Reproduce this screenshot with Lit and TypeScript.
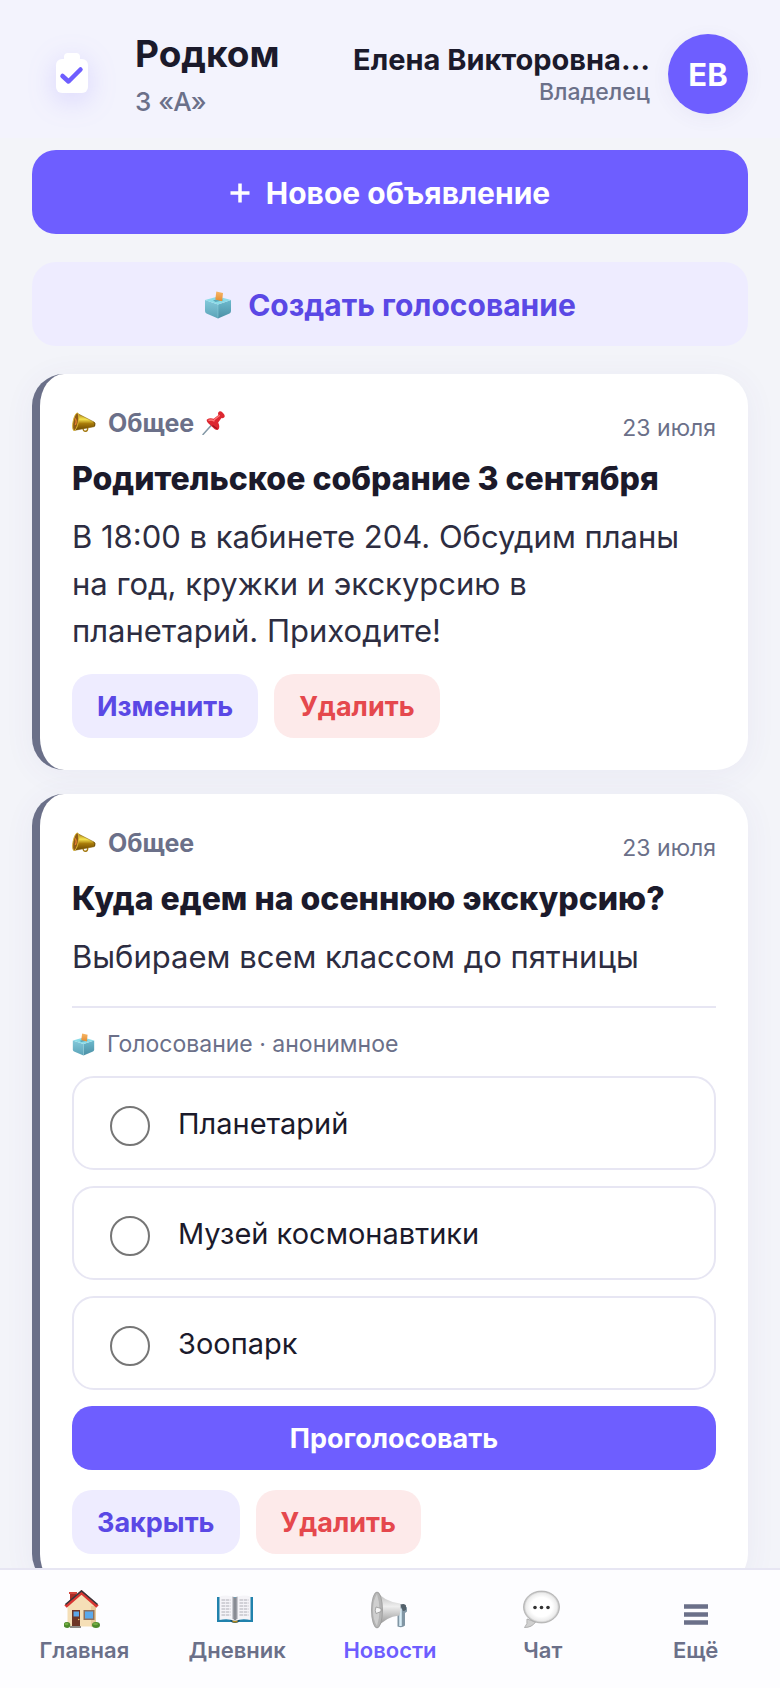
import { css, html, LitElement, nothing } from "lit";
import { customElement, property, state } from "lit/decorators.js";
import { classMap } from "lit/directives/class-map.js";

const icons = {
  logo: html`
    <svg viewBox="0 0 80 80" aria-hidden="true">
      <rect x="32" y="19" width="16" height="14" rx="4" fill="#fff" />
      <rect x="24" y="25" width="32" height="34" rx="6" fill="#fff" />
      <path d="M30.500 42l6 5.500L48.500 35.500" fill="none" stroke="#6e5eff" stroke-width="4.500"
        stroke-linecap="round" stroke-linejoin="round" />
    </svg>`,

  plus: html`
    <svg class="plus" viewBox="0 0 20 20" aria-hidden="true">
      <path d="M10 .500v19M.500 10h19" stroke="#fff" stroke-width="3.500" />
    </svg>`,

  ballot: html`
    <svg viewBox="0 0 28 28" aria-hidden="true">
      <defs>
        <linearGradient id="ballot-l" x1="0" y1="0" x2="0" y2="1">
          <stop offset="0" stop-color="#83c9da" /><stop offset="1" stop-color="#5ba3b8" />
        </linearGradient>
        <linearGradient id="ballot-r" x1="0" y1="0" x2="0" y2="1">
          <stop offset="0" stop-color="#6dbacd" /><stop offset="1" stop-color="#4b8fa5" />
        </linearGradient>
        <linearGradient id="ballot-p" x1="0" y1="0" x2="0" y2="1">
          <stop offset="0" stop-color="#f8b765" /><stop offset="1" stop-color="#e38c34" />
        </linearGradient>
      </defs>
      <path d="M1 9L14 13.500v14L2.500 22.500Q1 21.800 1 20z" fill="url(#ballot-l)" />
      <path d="M27 9L14 13.500v14l11.500-5Q27 21.800 27 20z" fill="url(#ballot-r)" />
      <path d="M1 9L14 5.500 27 9 14 13.500z" fill="#8bdce8" />
      <path d="M9 9.300l8-1.600 2.500 1.500-8 1.800z" fill="#5aa9bb" />
      <path d="M12.300.500l6.700 1.600-.9 8.200-6.800-1.700z" fill="url(#ballot-p)" />
      <path d="M14 13.500v13" fill="none" stroke="#8fd3df" stroke-width=".500" />
    </svg>`,

  horn: html`
    <svg viewBox="0 0 26 24" aria-hidden="true">
      <defs>
        <linearGradient id="horn-g" x1="0" y1="0" x2="0" y2="1">
          <stop offset="0" stop-color="#a47a0c" /><stop offset=".35" stop-color="#f6e34f" />
          <stop offset=".6" stop-color="#a87b0a" /><stop offset="1" stop-color="#6b4700" />
        </linearGradient>
      </defs>
      <path d="M12 17.500q0 3.700 2.800 3.500 2.400-.2 2.200-3.800" fill="none" stroke="#a47a12" stroke-width="1.500" />
      <path d="M5.500 1.500L24 11q1.300 1 .9 3.500l-1 1.500L2.500 20z" fill="url(#horn-g)" stroke="#83600f" stroke-width=".600" />
      <path d="M23.500 10.800q2 1.200.7 5" fill="none" stroke="#6b4d0e" stroke-width="1" />
      <ellipse cx="4" cy="10.700" rx="2.800" ry="9.700" transform="rotate(11 4 10.700)" fill="#8d5b18" stroke="#dcb632" stroke-width="1" />
      <path d="M3.200 7q2.500 3 .3 7" fill="none" stroke="#e9812f" stroke-width="1.400" />
    </svg>`,

  pin: html`
    <svg viewBox="0 0 24 24" aria-hidden="true">
      <path d="M1 23.500L10.500 13" stroke="#8398a6" stroke-width="1.500" stroke-linecap="round" />
      <path d="M16.300 1.500q1.500-2.500 4.500.2 3.300 3 1 5-1.200.8-2.300.3l-3.300 4.500q2.300 5.300-.2 7.300-1.500.6-3.500-.9L6 12Q4 9.500 5 8.500q2.500-2 6.700-.8L16.500 4q-.8-1-.2-2.500z" fill="#dc2730" />
      <path d="M12.500 8.500l4.800-3.700M7 9.300q3-.8 5 .6" fill="none" stroke="#ff7474" stroke-width="1.400" stroke-linecap="round" />
      <path d="M10.500 14.500q2.500 1.800 4.700 3.200" fill="none" stroke="#9e1320" stroke-width="1.200" />
    </svg>`,

  home: html`
    <svg viewBox="2 0 40 40" aria-hidden="true">
      <path d="M8 2h6v12H8z" fill="#a92c27" /><path d="M7 2h8v2H7z" fill="#d3453c" />
      <path d="M5.500 16L19.500 3 34 16v20.500H5.500z" fill="#f5dfb7" />
      <path d="M29 16h5v20.500h-5z" fill="#e8cb9b" />
      <path d="M3.500 16.500L19.500 2.500l16 14" fill="none" stroke="#d93632" stroke-width="3.600" />
      <path d="M3.500 14.500L19.500 1l16 13.500" fill="none" stroke="#35363b" stroke-width="1.600" />
      <path d="M10 20h8v17h-8z" fill="#6d3526" /><path d="M11.500 21.500h5.500v5h-5.500z" fill="#5ba7e8" />
      <circle cx="16.700" cy="29.500" r=".800" fill="#e8be5c" />
      <path d="M21.500 20h11v10h-11z" fill="#8f705c" /><path d="M23 21.500h8v7h-8z" fill="#5ba9ec" />
      <path d="M8 36h11v2H8z" fill="#8d8b87" />
      <ellipse cx="5" cy="35" rx="3.300" ry="2.900" fill="#4d8a2c" /><ellipse cx="34" cy="35" rx="4" ry="2.900" fill="#4d8a2c" />
      <ellipse cx="4.500" cy="34" rx="2" ry="1.300" fill="#75ad43" /><ellipse cx="33.500" cy="34" rx="2.500" ry="1.300" fill="#75ad43" />
    </svg>`,

  book: html`
    <svg viewBox="2 0 40 40" aria-hidden="true">
      <path d="M2 7h36v25H2z" fill="#2182ad" />
      <path d="M15 30h10q-1 3-5 3t-5-3z" fill="#16516e" />
      <path d="M17 30.500h6l-1 2h-4z" fill="#b38b20" />
      <path d="M4.500 6.500Q13 4 20 8v23q-7-3-15.500-1z" fill="#f5f4f8" />
      <path d="M35.500 6.500Q27 4 20 8v23q7-3 15.500-1z" fill="#f5f4f8" />
      <path d="M17.500 6.500q1.500 0 2.500 1.500 1-1.500 2.500-1.500v22.500q-1.500 0-2.500 2-1-2-2.500-2z" fill="#9b9da5" />
      <path d="M20 8v22" stroke="#666a72" stroke-width=".700" />
      <path d="M6.500 10h9M6.500 13h9M6.500 16h9M6.500 19h9M6.500 22h9M6.500 25h9M24.500 10h9M24.500 13h9M24.500 16h9M24.500 19h9M24.500 22h9M24.500 25h9"
        stroke="#a7a6af" stroke-width=".900" stroke-dasharray="3.500 .700" />
    </svg>`,

  news: html`
    <svg viewBox="0 0 40 40" aria-hidden="true">
      <defs>
        <linearGradient id="news-g" x1="0" y1="0" x2="0" y2="1">
          <stop offset="0" stop-color="#b5b5b5" /><stop offset=".4" stop-color="#eee" />
          <stop offset="1" stop-color="#858585" />
        </linearGradient>
      </defs>
      <path d="M27.500 17l6-2.500 3.500 3v4l-2 1.500v12.500q-3 3-7.500 1z" fill="#8196a4" />
      <path d="M30.500 18.500v17.500" stroke="#d8edf7" stroke-width="2.500" />
      <path d="M30 14.500q5-1.500 6 1v4q-1 1.500-3 1.500z" fill="#53616b" />
      <path d="M8 2q5 9 22 11.500 1.500 5-.5 12Q15 27 7 38z" fill="url(#news-g)" />
      <ellipse cx="7" cy="20" rx="5.500" ry="18" fill="#b5b5b5" stroke="#999" stroke-width=".800" />
      <path d="M7 4q5 16 0 32-4-6-4-16T7 4z" fill="#cfcfcf" />
      <path d="M6 17l5 1.500v3L6 23.500q-1.500-3 0-6.500z" fill="#f6f6f6" stroke="#8c8c8c" stroke-width=".700" />
    </svg>`,

  chat: html`
    <svg viewBox="3 0 40 40" aria-hidden="true">
      <defs>
        <radialGradient id="chat-g">
          <stop offset=".6" stop-color="#fff" /><stop offset=".87" stop-color="#ececec" />
          <stop offset="1" stop-color="#b3b3b3" />
        </radialGradient>
      </defs>
      <path d="M7 29q1 5-2.500 8.500Q12 37.500 15.500 32z" fill="#d0d0d0" stroke="#aaa" stroke-width=".900" />
      <ellipse cx="21.500" cy="17" rx="18" ry="16" fill="url(#chat-g)" stroke="#aaa" stroke-width=".700" />
      <circle cx="15" cy="17.500" r="1.800" fill="#333" /><circle cx="21.500" cy="17.500" r="1.800" fill="#333" />
      <circle cx="28" cy="17.500" r="1.800" fill="#333" />
    </svg>`,

  menu: html`
    <svg viewBox="0 0 40 40" aria-hidden="true">
      <path d="M8 16.500h24M8 24.500h24M8 32.500h24" stroke="#6b7089" stroke-width="4.500" />
    </svg>`,
};

interface Post {
  title: string;
  body: string;
  date: string;
  pinned?: boolean;
  options?: string[];
  action: string;
}

const posts: Post[] = [
  {
    title: "Родительское собрание 3 сентября",
    body: "В 18:00 в кабинете 204. Обсудим планы на год, кружки и экскурсию в планетарий. Приходите!",
    date: "23 июля",
    pinned: true,
    action: "Изменить",
  },
  {
    title: "Куда едем на осеннюю экскурсию?",
    body: "Выбираем всем классом до пятницы",
    date: "23 июля",
    options: ["Планетарий", "Музей космонавтики", "Зоопарк"],
    action: "Закрыть",
  },
];

const tabs = [
  { id: "home", label: "Главная" },
  { id: "book", label: "Дневник" },
  { id: "news", label: "Новости" },
  { id: "chat", label: "Чат" },
  { id: "menu", label: "Ещё" },
] as const;

const shared = css`
  * {
    box-sizing: border-box;
  }

  svg {
    display: block;
    flex: none;
  }

  button {
    border: 0;
    font-family: inherit;
    font-weight: 700;
    cursor: pointer;
  }

  .primary {
    background: #6e5eff;
    color: #fff;
  }

  .soft {
    background: #eeecff;
    color: #5a48e5;
  }

  .danger {
    background: #fdeaea;
    color: #e5484d;
  }
`;

@customElement("news-card")
export class NewsCard extends LitElement {
  @property({ attribute: false }) post!: Post;

  static styles = [
    shared,
    css`
      :host {
        display: block;
      }

      .card {
        padding: 32px;
        border-left: 8px solid #6b7089;
        border-radius: 32px;
        background: #fff;
        box-shadow: 0 4px 32px rgba(80, 70, 160, 0.06);
      }

      .head {
        display: flex;
        justify-content: space-between;
        height: 44px;
        margin-bottom: 11px;
        color: #6b7089;
      }

      .category {
        display: flex;
        align-items: center;
        height: 34px;
        font-size: 25px;
        font-weight: 700;
      }

      .category svg {
        width: 24px;
        height: 24px;
      }

      .category span {
        margin: 0 8px 0 12px;
      }

      .date {
        font-size: 23px;
        line-height: 44px;
      }

      h2 {
        margin: 0 0 16px;
        color: #1b1a2b;
        font-size: 32px;
        font-weight: 800;
        line-height: 36px;
      }

      p {
        margin: 0;
        color: #2d2d41;
        font-size: 31px;
        line-height: 47px;
      }

      .poll {
        display: flex;
        flex-direction: column;
        gap: 16px;
        margin: 26px 0 0;
        padding: 20px 0 0;
        border-top: 2px solid #e7e6f3;
      }

      .caption {
        display: flex;
        align-items: center;
        gap: 12px;
        color: #6b7089;
        font-size: 23px;
        line-height: 32px;
      }

      .caption svg {
        width: 23px;
        height: 23px;
      }

      .option {
        display: flex;
        align-items: center;
        gap: 22px;
        height: 94px;
        padding: 0 26px;
        border: 2px solid #e7e6f3;
        border-radius: 22px;
        color: #1b1a2b;
        font-size: 29px;
      }

      .option input {
        appearance: none;
        width: 40px;
        height: 40px;
        margin: 6px 6px 0 10px;
        border: 2px solid #767676;
        border-radius: 50%;
        background: #fff;
      }

      .option input:checked {
        border: 12px solid #6e5eff;
      }

      .actions {
        display: flex;
        gap: 16px;
        margin-top: 20px;
      }

      button {
        height: 64px;
        padding: 0 25px;
        border-radius: 20px;
        font-size: 27px;
      }
    `,
  ];

  private renderPoll(options: string[]) {
    return html`
      <form class="poll" @submit=${(e: Event) => e.preventDefault()}>
        <div class="caption">${icons.ballot}Голосование · анонимное</div>
        ${options.map(
          (option) => html`
            <label class="option">
              <input type="radio" name="vote" value=${option} />
              ${option}
            </label>
          `
        )}
        <button class="primary" type="submit">Проголосовать</button>
      </form>
    `;
  }

  render() {
    const { title, body, date, pinned, options, action } = this.post;
    return html`
      <article class="card">
        <div class="head">
          <div class="category">
            ${icons.horn}<span>Общее</span>${pinned ? icons.pin : nothing}
          </div>
          <time class="date">${date}</time>
        </div>
        <h2>${title}</h2>
        <p>${body}</p>
        ${options ? this.renderPoll(options) : nothing}
        <div class="actions">
          <button class="soft" type="button">${action}</button>
          <button class="danger" type="button">Удалить</button>
        </div>
      </article>
    `;
  }
}

@customElement("app-root")
export class AppRoot extends LitElement {
  @state() private tab = "news";

  static styles = [
    shared,
    css`
      :host {
        display: flex;
        flex-direction: column;
        height: 100vh;
        background: #f3f4f9;
        color: #1b1a2b;
        font-family: Inter, "Liberation Sans", sans-serif;
      }

      header {
        display: flex;
        align-items: center;
        flex: none;
        padding: 30px 32px 20px;
        background: #f3f3fd;
      }

      .logo {
        width: 80px;
        margin-right: 23px;
        filter: drop-shadow(0 7px 14px rgba(108, 92, 255, 0.2));
      }

      .brand {
        flex: 1;
      }

      h1 {
        margin: 0 0 8px;
        font-size: 37px;
        font-weight: 700;
        line-height: 48px;
      }

      .class-name {
        color: #6b7089;
        font-size: 26px;
        font-weight: 500;
        line-height: 32px;
      }

      .user {
        text-align: right;
      }

      .user-name {
        font-size: 29px;
        font-weight: 700;
        line-height: 36px;
      }

      .user-role {
        color: #6b7089;
        font-size: 23px;
        font-weight: 500;
        line-height: 28px;
      }

      .avatar {
        display: grid;
        place-items: center;
        width: 80px;
        height: 80px;
        margin-left: 18px;
        border-radius: 50%;
        background: #6e5eff;
        box-shadow: 0 4px 20px rgba(80, 70, 160, 0.06);
        color: #fff;
        font-size: 31px;
        font-weight: 700;
      }

      main {
        display: flex;
        flex: 1;
        flex-direction: column;
        gap: 28px;
        min-height: 0;
        padding: 12px 32px 32px;
        overflow-y: auto;
        scrollbar-width: none;
      }

      .wide {
        display: flex;
        align-items: center;
        justify-content: center;
        flex: none;
        gap: 16px;
        height: 84px;
        padding: 2px 24px 0;
        border-radius: 24px;
        font-size: 30px;
      }

      .wide svg {
        width: 28px;
        height: 28px;
      }

      .wide .plus {
        width: 20px;
        height: 20px;
      }

      .feed {
        display: flex;
        flex-direction: column;
        gap: 24px;
      }

      nav {
        display: grid;
        grid-template-columns: repeat(5, 1fr);
        flex: none;
        padding: 20px 8px 24px;
        border-top: 2px solid #e7e6f3;
        background: #fdfdff;
      }

      nav a {
        display: flex;
        flex-direction: column;
        align-items: center;
        gap: 6px;
        color: #6b7089;
        font-size: 22px;
        font-weight: 600;
        line-height: 28px;
        text-decoration: none;
      }

      nav a.active {
        color: #6e5eff;
      }

      nav svg {
        width: 40px;
        height: 40px;
      }
    `,
  ];

  private selectTab(e: Event, id: string) {
    e.preventDefault();
    this.tab = id;
  }

  render() {
    return html`
      <header>
        <div class="logo">${icons.logo}</div>
        <div class="brand">
          <h1>Родком</h1>
          <div class="class-name">3 «А»</div>
        </div>
        <div class="user">
          <div class="user-name">Елена Викторовна…</div>
          <div class="user-role">Владелец</div>
        </div>
        <div class="avatar">ЕВ</div>
      </header>
      <main>
        <button class="wide primary" type="button">${icons.plus}Новое объявление</button>
        <button class="wide soft" type="button">${icons.ballot}Создать голосование</button>
        <div class="feed">
          ${posts.map((post) => html`<news-card .post=${post}></news-card>`)}
        </div>
      </main>
      <nav>
        ${tabs.map(
          ({ id, label }) => html`
            <a
              href="#${id}"
              class=${classMap({ active: this.tab === id })}
              @click=${(e: Event) => this.selectTab(e, id)}
            >
              ${icons[id]}<span>${label}</span>
            </a>
          `
        )}
      </nav>
    `;
  }
}
